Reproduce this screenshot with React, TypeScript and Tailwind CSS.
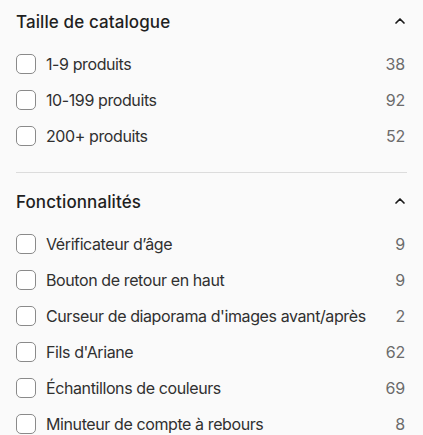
import React from 'react';

interface FilterOption {
  label: string;
  count: number;
}

interface FilterSection {
  title: string;
  options: FilterOption[];
}

const sections: FilterSection[] = [
  {
    title: 'Taille de catalogue',
    options: [
      { label: '1-9 produits', count: 38 },
      { label: '10-199 produits', count: 92 },
      { label: '200+ produits', count: 52 },
    ],
  },
  {
    title: 'Fonctionnalités',
    options: [
      { label: "Vérificateur d’âge", count: 9 },
      { label: 'Bouton de retour en haut', count: 9 },
      { label: "Curseur de diaporama d'images avant/après", count: 2 },
      { label: "Fils d'Ariane", count: 62 },
      { label: 'Échantillons de couleurs', count: 69 },
      { label: 'Minuteur de compte à rebours', count: 8 },
    ],
  },
];

function ChevronUp() {
  return (
    <svg width="12" height="8" viewBox="0 0 12 8" fill="none" className="text-[#1a1a1a]">
      <path d="M2 6 L6 2 L10 6" stroke="currentColor" strokeWidth="1.7" strokeLinecap="round" strokeLinejoin="round" />
    </svg>
  );
}

export default function App() {
  return (
    <div className="min-h-screen bg-[#fafafa] px-4 font-['Inter',sans-serif] overflow-hidden">
      {sections.map((section, i) => (
        <div
          key={section.title}
          className={i === 0 ? 'border-b border-[#dcdcdc] pb-[18px]' : 'pt-[7px]'}
        >
          <button className="flex h-[42px] w-full items-center justify-between pr-[1px] text-left">
            <span className="pt-[3px] text-[17px] font-medium tracking-[0.1px] text-[#1f1f1f]">{section.title}</span>
            <ChevronUp />
          </button>
          <ul className="mt-1">
            {section.options.map((opt) => (
              <li key={opt.label} className="flex h-9 items-center">
                <span className="h-5 w-5 shrink-0 rounded-[5px] border-[1.5px] border-[#8a8a8a] bg-white" />
                <span className="ml-[10px] flex-1 text-[16px] tracking-[-0.4px] text-[#303030]">{opt.label}</span>
                <span className="pr-[2px] text-[16px] tracking-[-0.2px] text-[#6b6b6b]">{opt.count}</span>
              </li>
            ))}
          </ul>
        </div>
      ))}
    </div>
  );
}
